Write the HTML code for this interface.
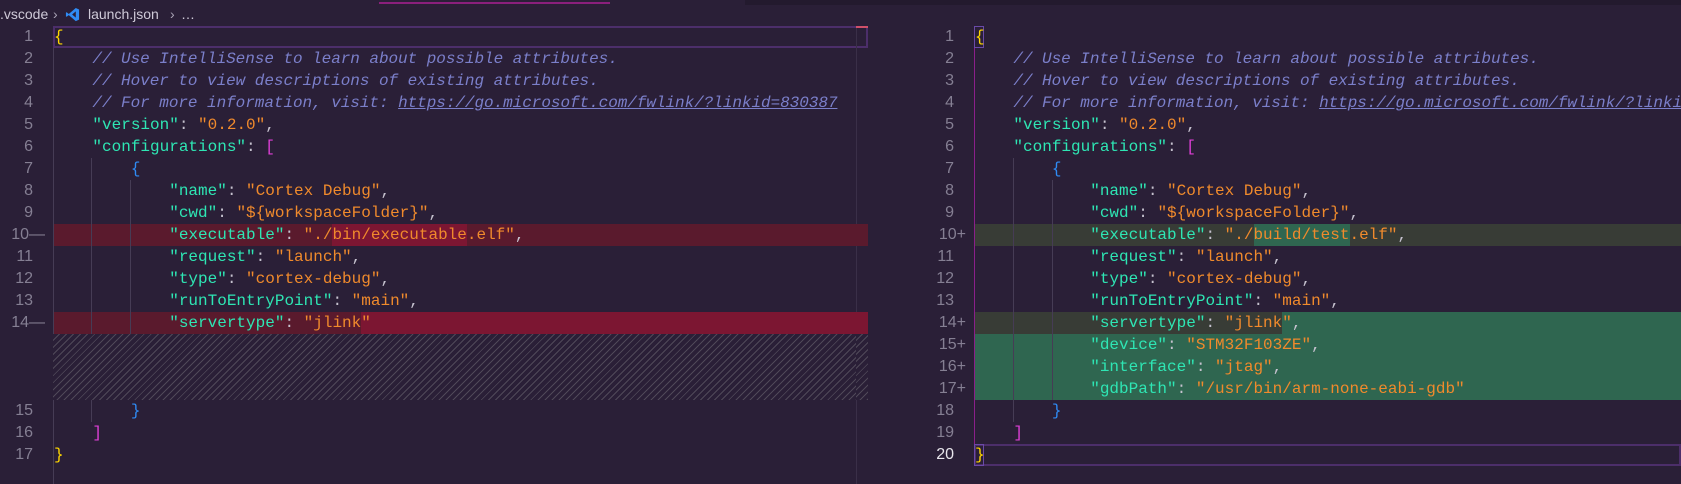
<!DOCTYPE html>
<html><head><meta charset="utf-8"><style>
html,body{margin:0;padding:0;}
body{width:1681px;height:484px;background:#2a1f37;position:relative;overflow:hidden;font-family:"Liberation Mono",monospace;}
.bc{position:absolute;top:4px;height:20px;line-height:20px;font-family:"Liberation Sans",sans-serif;font-size:14px;color:#cfcad8;}
.row{position:absolute;height:22px;line-height:22px;font-size:16px;white-space:pre;}
.ln{position:absolute;height:22px;line-height:22px;font-family:"Liberation Sans",sans-serif;font-size:16px;color:#857f93;text-align:right;}
.k{color:#2ee6b4}.s{color:#f08a2c}.p{color:#c6c2cf}.c{color:#7b7fca;font-style:italic;letter-spacing:-0.05px}
.u{text-decoration:underline}
.y{color:#ffd700}.m{color:#dd3fd6}.b{color:#2f8cf5}
.bg{position:absolute;height:22px;}
.g{position:absolute;width:1px;background:#463c55;}
</style></head><body>
<div style="position:absolute;left:379px;top:2px;width:231px;height:2px;background:#8a1f7c"></div>
<div style="position:absolute;left:745px;top:0;width:936px;height:5px;background:#231a2e"></div>
<div class="bc" style="left:0">.vscode</div>
<div class="bc" style="left:53px;color:#a9a3b5">›</div>
<svg style="position:absolute;left:65px;top:7px" width="15" height="15" viewBox="0 0 16 16"><path d="M11.5 1 L15 2.6 V13.4 L11.5 15 L4 8.6 L1.8 10.4 L1 10 V6 L1.8 5.6 L4 7.4 Z M11.5 4.7 L7.6 8 L11.5 11.3 Z" fill="#2f8cf5"/></svg>
<div class="bc" style="left:88px">launch.json</div>
<div class="bc" style="left:170px;color:#a9a3b5">›</div>
<div class="bc" style="left:181px">…</div>

<!-- left editor backgrounds -->
<div style="position:absolute;left:53px;top:26px;width:815px;height:22px;box-sizing:border-box;border:2px solid #4c2e6a"></div>
<div style="position:absolute;left:856px;top:26px;width:12px;height:2px;background:#d0506a"></div>
<div style="position:absolute;left:856px;top:28px;width:1px;height:456px;background:#3a2f48"></div>
<div class="bg" style="left:53px;top:224px;width:803px;background:#5a1a2d"></div>
<div class="bg" style="left:332px;top:224px;width:135px;background:#7c1632"></div>
<div class="bg" style="left:53px;top:312px;width:803px;background:#5a1a2d"></div>
<div class="bg" style="left:361px;top:312px;width:495px;background:#7c1632"></div>
<div style="position:absolute;left:53px;top:334px;width:803px;height:66px;background:repeating-linear-gradient(135deg,#2a1f37 0 4px,#4f4858 4px 5px)"></div>
<div style="position:absolute;left:856px;top:224px;width:12px;height:22px;background:#5a1a2d"></div>
<div style="position:absolute;left:856px;top:312px;width:12px;height:22px;background:#7c1632"></div>
<div style="position:absolute;left:856px;top:334px;width:12px;height:66px;background:repeating-linear-gradient(135deg,#2a1f37 0 4px,#4f4858 4px 5px)"></div>
<div class="g" style="left:53px;top:48px;height:286px"></div>
<div class="g" style="left:53px;top:400px;height:84px"></div>
<div class="g" style="left:91px;top:158px;height:176px"></div>
<div class="g" style="left:91px;top:400px;height:22px"></div>
<div class="g" style="left:130px;top:180px;height:154px"></div>

<!-- right editor backgrounds -->
<div style="position:absolute;left:974px;top:444px;width:707px;height:22px;box-sizing:border-box;border:2px solid #4c2e6a"></div>
<div class="bg" style="left:975px;top:224px;width:706px;background:#383c36"></div>
<div class="bg" style="left:1254px;top:224px;width:96px;background:#2f6650"></div>
<div class="bg" style="left:975px;top:312px;width:706px;background:#2f6650"></div>
<div class="bg" style="left:975px;top:312px;width:307px;background:#383c36"></div>
<div style="position:absolute;left:975px;top:334px;width:706px;height:66px;background:#2f6650"></div>
<div style="position:absolute;left:974px;top:48px;width:1px;height:396px;background:#8a1f8a"></div>
<div class="g" style="left:1013px;top:158px;height:264px"></div>
<div class="g" style="left:1052px;top:180px;height:220px"></div>
<div style="position:absolute;left:974px;top:26px;width:10px;height:22px;box-sizing:border-box;border:1px solid #6a4aa8"></div>
<div style="position:absolute;left:974px;top:444px;width:10px;height:22px;box-sizing:border-box;border:1px solid #6a4aa8"></div>

<!-- left line numbers -->
<div class="ln" style="left:0;width:33px;top:26px">1</div>
<div class="ln" style="left:0;width:33px;top:48px">2</div>
<div class="ln" style="left:0;width:33px;top:70px">3</div>
<div class="ln" style="left:0;width:33px;top:92px">4</div>
<div class="ln" style="left:0;width:33px;top:114px">5</div>
<div class="ln" style="left:0;width:33px;top:136px">6</div>
<div class="ln" style="left:0;width:33px;top:158px">7</div>
<div class="ln" style="left:0;width:33px;top:180px">8</div>
<div class="ln" style="left:0;width:33px;top:202px">9</div>
<div class="ln" style="left:0;width:45px;top:224px">10—</div>
<div class="ln" style="left:0;width:33px;top:246px">11</div>
<div class="ln" style="left:0;width:33px;top:268px">12</div>
<div class="ln" style="left:0;width:33px;top:290px">13</div>
<div class="ln" style="left:0;width:45px;top:312px">14—</div>
<div class="ln" style="left:0;width:33px;top:400px">15</div>
<div class="ln" style="left:0;width:33px;top:422px">16</div>
<div class="ln" style="left:0;width:33px;top:444px">17</div>

<!-- left code -->
<div class="row" style="left:54px;top:26px"><span class="y">{</span></div>
<div class="row" style="left:54px;top:48px">    <span class="c">// Use IntelliSense to learn about possible attributes.</span></div>
<div class="row" style="left:54px;top:70px">    <span class="c">// Hover to view descriptions of existing attributes.</span></div>
<div class="row" style="left:54px;top:92px">    <span class="c">// For more information, visit: <span class="u">https://go.microsoft.com/fwlink/?linkid=830387</span></span></div>
<div class="row" style="left:54px;top:114px">    <span class="k">"version"</span><span class="p">: </span><span class="s">"0.2.0"</span><span class="p">,</span></div>
<div class="row" style="left:54px;top:136px">    <span class="k">"configurations"</span><span class="p">: </span><span class="m">[</span></div>
<div class="row" style="left:54px;top:158px">        <span class="b">{</span></div>
<div class="row" style="left:54px;top:180px">            <span class="k">"name"</span><span class="p">: </span><span class="s">"Cortex Debug"</span><span class="p">,</span></div>
<div class="row" style="left:54px;top:202px">            <span class="k">"cwd"</span><span class="p">: </span><span class="s">"${workspaceFolder}"</span><span class="p">,</span></div>
<div class="row" style="left:54px;top:224px">            <span class="k">"executable"</span><span class="p">: </span><span class="s">"./bin/executable.elf"</span><span class="p">,</span></div>
<div class="row" style="left:54px;top:246px">            <span class="k">"request"</span><span class="p">: </span><span class="s">"launch"</span><span class="p">,</span></div>
<div class="row" style="left:54px;top:268px">            <span class="k">"type"</span><span class="p">: </span><span class="s">"cortex-debug"</span><span class="p">,</span></div>
<div class="row" style="left:54px;top:290px">            <span class="k">"runToEntryPoint"</span><span class="p">: </span><span class="s">"main"</span><span class="p">,</span></div>
<div class="row" style="left:54px;top:312px">            <span class="k">"servertype"</span><span class="p">: </span><span class="s">"jlink"</span></div>
<div class="row" style="left:54px;top:400px">        <span class="b">}</span></div>
<div class="row" style="left:54px;top:422px">    <span class="m">]</span></div>
<div class="row" style="left:54px;top:444px"><span class="y">}</span></div>

<!-- right line numbers -->
<div class="ln" style="left:900px;width:54px;top:26px">1</div>
<div class="ln" style="left:900px;width:54px;top:48px">2</div>
<div class="ln" style="left:900px;width:54px;top:70px">3</div>
<div class="ln" style="left:900px;width:54px;top:92px">4</div>
<div class="ln" style="left:900px;width:54px;top:114px">5</div>
<div class="ln" style="left:900px;width:54px;top:136px">6</div>
<div class="ln" style="left:900px;width:54px;top:158px">7</div>
<div class="ln" style="left:900px;width:54px;top:180px">8</div>
<div class="ln" style="left:900px;width:54px;top:202px">9</div>
<div class="ln" style="left:900px;width:66px;top:224px">10+</div>
<div class="ln" style="left:900px;width:54px;top:246px">11</div>
<div class="ln" style="left:900px;width:54px;top:268px">12</div>
<div class="ln" style="left:900px;width:54px;top:290px">13</div>
<div class="ln" style="left:900px;width:66px;top:312px">14+</div>
<div class="ln" style="left:900px;width:66px;top:334px">15+</div>
<div class="ln" style="left:900px;width:66px;top:356px">16+</div>
<div class="ln" style="left:900px;width:66px;top:378px">17+</div>
<div class="ln" style="left:900px;width:54px;top:400px">18</div>
<div class="ln" style="left:900px;width:54px;top:422px">19</div>
<div class="ln" style="left:900px;width:54px;top:444px;color:#e8e6ec">20</div>

<!-- right code -->
<div class="row" style="left:975px;top:26px"><span class="y">{</span></div>
<div class="row" style="left:975px;top:48px">    <span class="c">// Use IntelliSense to learn about possible attributes.</span></div>
<div class="row" style="left:975px;top:70px">    <span class="c">// Hover to view descriptions of existing attributes.</span></div>
<div class="row" style="left:975px;top:92px">    <span class="c">// For more information, visit: <span class="u">https://go.microsoft.com/fwlink/?linkid=830387</span></span></div>
<div class="row" style="left:975px;top:114px">    <span class="k">"version"</span><span class="p">: </span><span class="s">"0.2.0"</span><span class="p">,</span></div>
<div class="row" style="left:975px;top:136px">    <span class="k">"configurations"</span><span class="p">: </span><span class="m">[</span></div>
<div class="row" style="left:975px;top:158px">        <span class="b">{</span></div>
<div class="row" style="left:975px;top:180px">            <span class="k">"name"</span><span class="p">: </span><span class="s">"Cortex Debug"</span><span class="p">,</span></div>
<div class="row" style="left:975px;top:202px">            <span class="k">"cwd"</span><span class="p">: </span><span class="s">"${workspaceFolder}"</span><span class="p">,</span></div>
<div class="row" style="left:975px;top:224px">            <span class="k">"executable"</span><span class="p">: </span><span class="s">"./build/test.elf"</span><span class="p">,</span></div>
<div class="row" style="left:975px;top:246px">            <span class="k">"request"</span><span class="p">: </span><span class="s">"launch"</span><span class="p">,</span></div>
<div class="row" style="left:975px;top:268px">            <span class="k">"type"</span><span class="p">: </span><span class="s">"cortex-debug"</span><span class="p">,</span></div>
<div class="row" style="left:975px;top:290px">            <span class="k">"runToEntryPoint"</span><span class="p">: </span><span class="s">"main"</span><span class="p">,</span></div>
<div class="row" style="left:975px;top:312px">            <span class="k">"servertype"</span><span class="p">: </span><span class="s">"jlink"</span><span class="p">,</span></div>
<div class="row" style="left:975px;top:334px">            <span class="k">"device"</span><span class="p">: </span><span class="s">"STM32F103ZE"</span><span class="p">,</span></div>
<div class="row" style="left:975px;top:356px">            <span class="k">"interface"</span><span class="p">: </span><span class="s">"jtag"</span><span class="p">,</span></div>
<div class="row" style="left:975px;top:378px">            <span class="k">"gdbPath"</span><span class="p">: </span><span class="s">"/usr/bin/arm-none-eabi-gdb"</span></div>
<div class="row" style="left:975px;top:400px">        <span class="b">}</span></div>
<div class="row" style="left:975px;top:422px">    <span class="m">]</span></div>
<div class="row" style="left:975px;top:444px"><span class="y">}</span></div>
</body></html>
